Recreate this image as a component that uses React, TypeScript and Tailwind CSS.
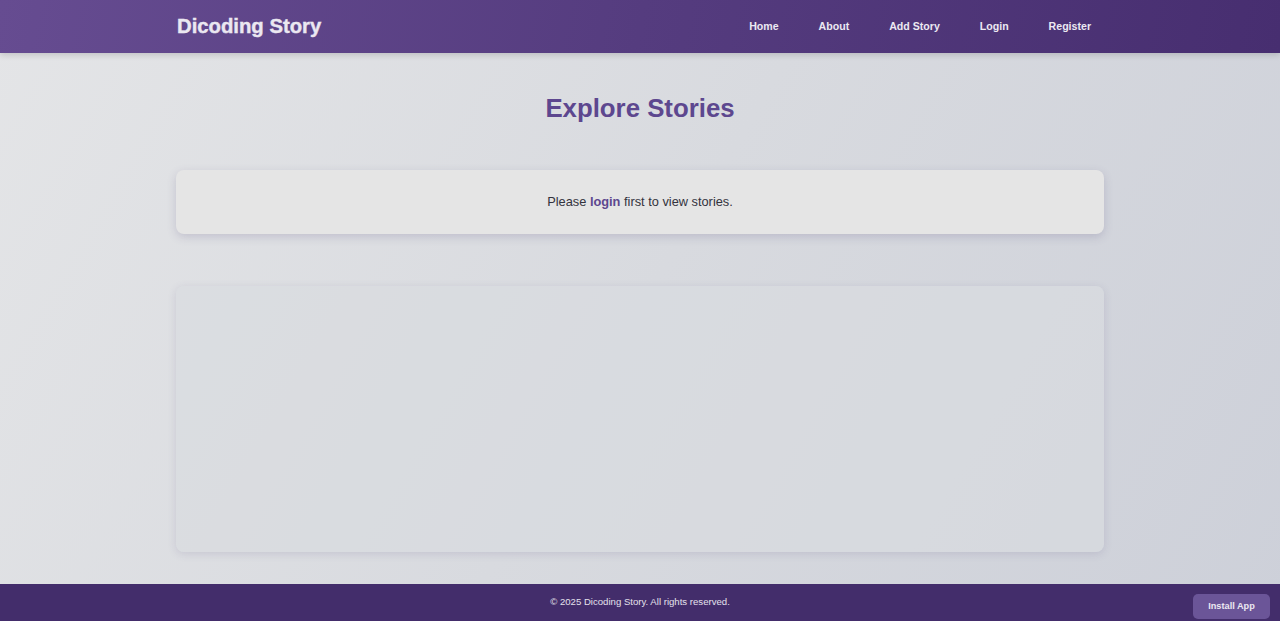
import React from "react";

export default function App() {
  return (
    <div
      className="min-h-[621px] flex flex-col bg-[linear-gradient(120deg,#e4e5e7_0%,#d8dadf_50%,#cdd0d9_100%)]"
      style={{ fontFamily: '"Liberation Sans", Arial, sans-serif' }}
    >
      <header className="h-[53px] shrink-0 bg-[linear-gradient(100deg,#664c91_0%,#553c7f_50%,#472e70_100%)] shadow-[0_2px_6px_rgba(0,0,0,0.15)]">
        <div className="mx-auto w-[928px] h-full flex items-center justify-between">
          <div className="text-[20.3px] font-bold text-[#ebe8f1] pl-[1px] [-webkit-text-stroke:0.4px_#ebe8f1]">
            Dicoding Story
          </div>
          <nav className="flex items-center gap-[40px] pr-[13px] text-[10.6px] font-bold text-[#ece9f2]">
            <a>Home</a>
            <a>About</a>
            <a>Add Story</a>
            <a>Login</a>
            <a>Register</a>
          </nav>
        </div>
      </header>

      <main className="flex-1 flex flex-col items-center pt-[40px]">
        <h1 className="text-[25.8px] leading-[31px] font-bold text-[#5d478f]">
          Explore Stories
        </h1>
        <div className="mt-[46px] w-[928px] h-[64px] rounded-[8px] bg-[#e5e5e5] shadow-[0_3px_10px_rgba(80,70,120,0.2)] flex items-center justify-center text-[12.8px] text-[#33333d]">
          <span>
            Please <span className="font-bold text-[#5d478f]">login</span> first to view stories.
          </span>
        </div>
        <div className="mt-[52px] w-[928px] h-[266px] rounded-[8px] bg-[#d9dbdf]/70 shadow-[0_2px_8px_rgba(80,70,120,0.15)]" />
      </main>

      <footer className="mt-[32px] h-[37px] shrink-0 bg-[#432d6b] flex items-center justify-center text-[9.6px] text-[#e4e1ec]">
        © 2025 Dicoding Story. All rights reserved.
      </footer>

      <button className="fixed right-[10px] bottom-[2px] w-[77px] h-[25px] rounded-[5px] bg-[#6b5598] text-[9.2px] font-bold text-[#ebe8f1]">
        Install App
      </button>
    </div>
  );
}
